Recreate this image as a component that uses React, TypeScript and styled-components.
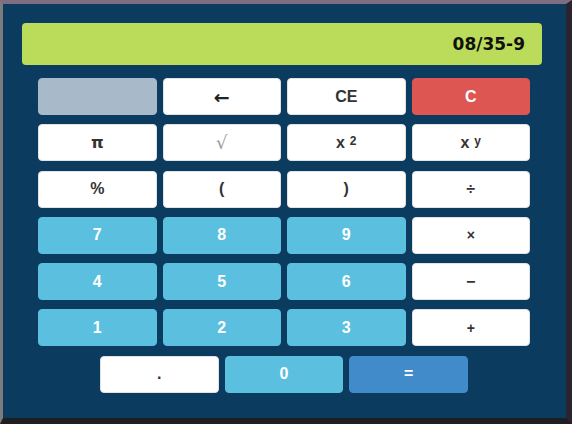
import React from "react";
import styled, { createGlobalStyle } from "styled-components";

const Global = createGlobalStyle`
  html, body { margin: 0; padding: 0; background: #232026; }
  #root { width: 572px; height: 424px; }
`;

const Screen = styled.div`
  width: 572px;
  height: 424px;
  box-sizing: border-box;
  border-top: 4px solid #7d6e82;
  border-left: 3px solid #7c7c7c;
  border-right: 6px solid #2a2330;
  border-bottom: 6px solid #1f1f22;
  display: flex;
  background: #232026;
`;

const Panel = styled.div`
  flex: 1;
  background: #0c3b60;
  box-sizing: border-box;
  padding: 19px 24px 0 19px;
  display: flex;
  flex-direction: column;
  align-items: flex-start;
  font-family: "Liberation Sans", Arial, sans-serif;
`;

const Display = styled.div`
  align-self: stretch;
  height: 42px;
  background: #bbdc5a;
  border-radius: 4px;
  display: flex;
  align-items: center;
  justify-content: flex-end;
  padding-right: 17px;
  font-family: "DejaVu Sans", Verdana, sans-serif;
  font-weight: bold;
  font-size: 17px;
  color: #111;
  margin-bottom: 13px;
`;

const Keys = styled.div`
  width: 492px;
  margin-left: 16px;
  display: grid;
  grid-template-columns: repeat(4, 1fr);
  column-gap: 6px;
  row-gap: 9.3px;
`;

const LastRow = styled.div`
  width: 368px;
  margin-left: 78px;
  display: grid;
  grid-template-columns: repeat(3, 1fr);
  column-gap: 6px;
  margin-top: 9.3px;
`;

type Kind = "blank" | "light" | "danger" | "digit" | "equals";

const colors: Record<Kind, { bg: string; fg: string; border: string }> = {
  blank: { bg: "#a8bac9", fg: "#333", border: "#a8bac9" },
  light: { bg: "#ffffff", fg: "#333", border: "#e2e2e2" },
  danger: { bg: "#dd5652", fg: "#ffffff", border: "#dd5652" },
  digit: { bg: "#5bbfdf", fg: "#ffffff", border: "#5bbfdf" },
  equals: { bg: "#428bca", fg: "#ffffff", border: "#428bca" },
};

const Key = styled.button<{ $kind: Kind }>`
  height: 37px;
  box-sizing: border-box;
  border-radius: 4px;
  border: 1px solid ${(p) => colors[p.$kind].border};
  background: ${(p) => colors[p.$kind].bg};
  color: ${(p) => colors[p.$kind].fg};
  font-family: "Liberation Sans", Arial, sans-serif;
  font-weight: bold;
  font-size: 16px;
  padding: 0;
  display: flex;
  align-items: center;
  justify-content: center;
`;

const Root = styled.span`
  font-family: "DejaVu Serif", "Liberation Serif", serif;
  font-weight: normal;
  color: #9a9a9a;
  font-size: 18px;
`;

const Arrow = styled.span`
  font-family: "DejaVu Sans", sans-serif;
  font-weight: bold;
  font-size: 19px;
  color: #222;
`;

const Pi = styled.span`
  font-family: "DejaVu Sans", sans-serif;
  font-weight: bold;
  font-size: 16px;
`;

const Sup = styled.sup`
  font-size: 12px;
  margin-left: 5px;
  position: relative;
  top: -2px;
`;

const Small = styled.span`
  font-size: 14px;
`;

export default function App() {
  return (
    <>
      <Global />
      <Screen>
        <Panel>
          <Display>08/35-9</Display>
          <Keys>
            <Key $kind="blank" />
            <Key $kind="light"><Arrow>←</Arrow></Key>
            <Key $kind="light">CE</Key>
            <Key $kind="danger">C</Key>

            <Key $kind="light"><Pi>π</Pi></Key>
            <Key $kind="light"><Root>√</Root></Key>
            <Key $kind="light">x<Sup>2</Sup></Key>
            <Key $kind="light">x<Sup>y</Sup></Key>

            <Key $kind="light">%</Key>
            <Key $kind="light">(</Key>
            <Key $kind="light">)</Key>
            <Key $kind="light">÷</Key>

            <Key $kind="digit">7</Key>
            <Key $kind="digit">8</Key>
            <Key $kind="digit">9</Key>
            <Key $kind="light"><Small>×</Small></Key>

            <Key $kind="digit">4</Key>
            <Key $kind="digit">5</Key>
            <Key $kind="digit">6</Key>
            <Key $kind="light">−</Key>

            <Key $kind="digit">1</Key>
            <Key $kind="digit">2</Key>
            <Key $kind="digit">3</Key>
            <Key $kind="light"><Small>+</Small></Key>
          </Keys>
          <LastRow>
            <Key $kind="light">.</Key>
            <Key $kind="digit">0</Key>
            <Key $kind="equals">=</Key>
          </LastRow>
        </Panel>
      </Screen>
    </>
  );
}
